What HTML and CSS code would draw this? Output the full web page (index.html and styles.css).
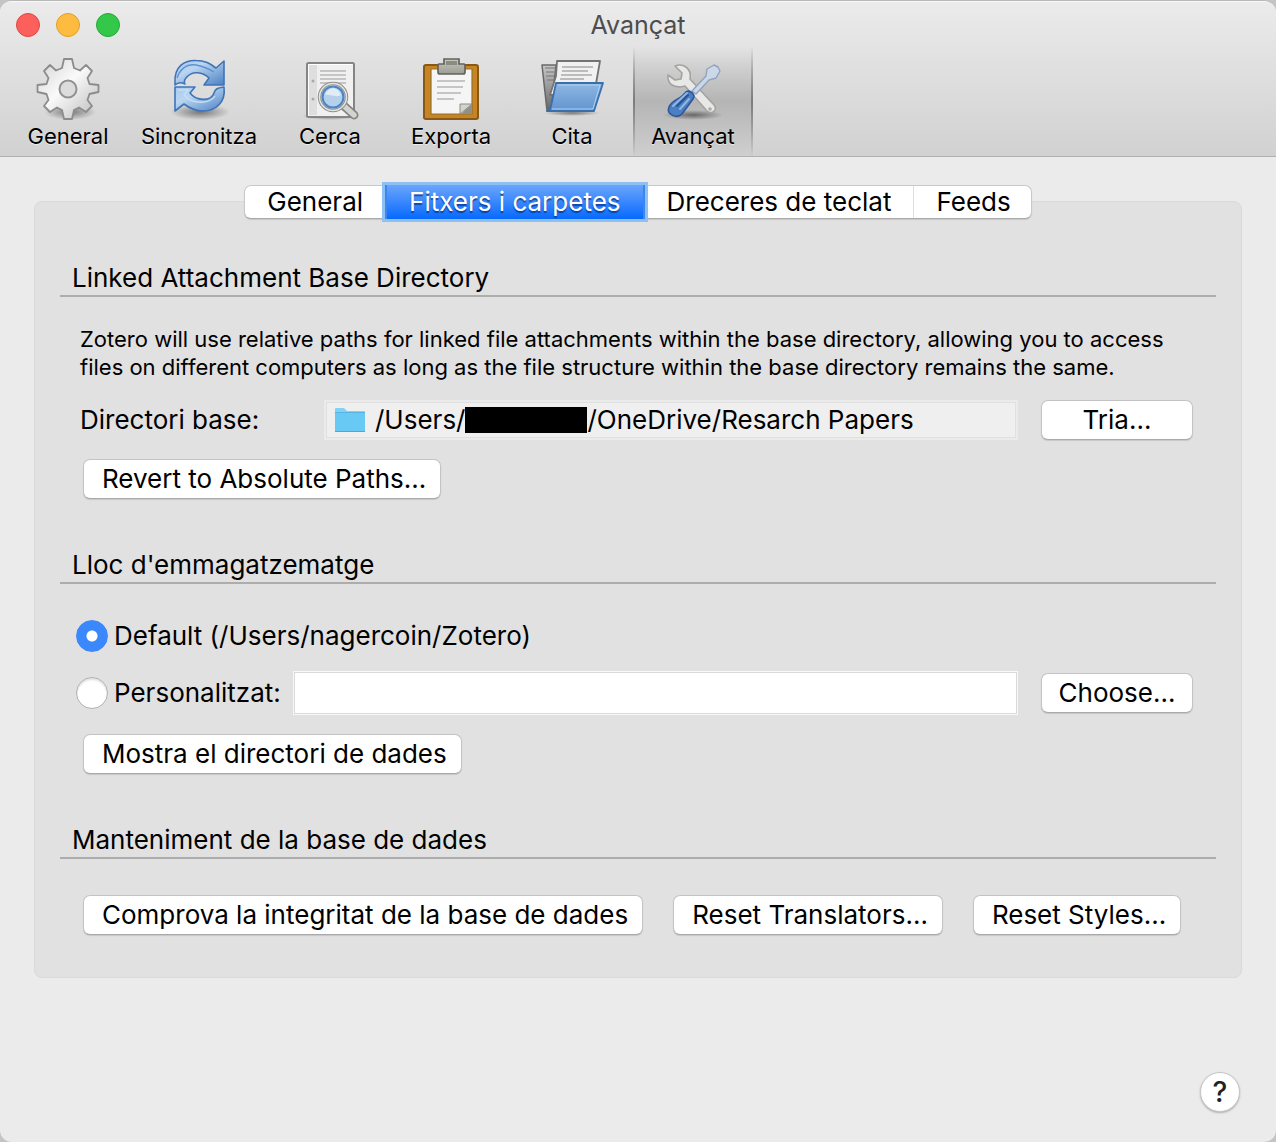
FILE: index.html
```html
<!DOCTYPE html>
<html lang="ca">
<head>
<meta charset="utf-8">
<title>Avançat</title>
<link rel="stylesheet" href="styles.css">
</head>
<body>
<div class="window">
  <header class="header">
    <div class="titlebar">
      <div class="lights">
        <button class="light light-close" type="button" aria-label="Close"></button>
        <button class="light light-minimize" type="button" aria-label="Minimize"></button>
        <button class="light light-zoom" type="button" aria-label="Zoom"></button>
      </div>
      <h1 class="title">Avançat</h1>
    </div>
    <nav class="toolbar">
      <button class="tool" type="button">
        <svg class="tool-icon" viewBox="0 0 64 64" aria-hidden="true">
          <defs>
            <linearGradient id="gear" x1="0" y1="0" x2="1" y2="1"><stop offset="0" stop-color="#d2d2d2"/><stop offset=".45" stop-color="#fafafa"/><stop offset="1" stop-color="#b9b9b9"/></linearGradient>
            <radialGradient id="shade"><stop offset="0" stop-color="#000" stop-opacity=".45"/><stop offset="1" stop-color="#000" stop-opacity="0"/></radialGradient>
          </defs>
          <ellipse cx="34" cy="56" rx="26" ry="8" fill="url(#shade)"/>
          <path d="M28 3h8l2 9 6 2.500 6-5.500 6 6-4.500 7 2 6 9 1v7l-9 2-2 6 4.500 6-6 6-7-4.500-5 2.500-2 9h-8l-2-9-5-2.500-7 4.500-6-6 4.500-6-2-6-9-2v-7l9-1 2-6-4.500-7 6-6 6 5.500 6-2.500z" fill="url(#gear)" stroke="#8c8c8c" stroke-width="1.800" stroke-linejoin="round"/>
          <circle cx="32" cy="33" r="8.500" fill="#dcdcdc" stroke="#929292" stroke-width="2"/>
        </svg>
        <span class="tool-label">General</span>
      </button>
      <button class="tool tool-wide" type="button">
        <svg class="tool-icon" viewBox="0 0 64 64" aria-hidden="true">
          <defs><linearGradient id="sync" x1="0" y1="0" x2="1" y2="1"><stop offset="0" stop-color="#a9cbef"/><stop offset=".35" stop-color="#b9d5f1"/><stop offset="1" stop-color="#4a80c4"/></linearGradient></defs>
          <ellipse cx="33" cy="56" rx="30" ry="8" fill="url(#shade)"/>
          <path d="M8 27C7 10 18 4 29 4.500c9 0 14 3 20 7.500l8-7v24H37l5-7c-6-6-17-8-23 0-2 2-2 5-1 6-4-2-8-1-10 1z" fill="url(#sync)" stroke="#3f74b6" stroke-width="1.600" stroke-linejoin="round"/>
          <path d="M10 22c4-11 11-14 19-13 6 1 13 4 18 7" fill="none" stroke="#5f92cf" stroke-width="1.400"/>
          <path d="M8 31h20l-5 6c6 8 21 9 24 0 1-3 2-5 10-6 2 16-9 24-21 24-9 0-15-4-19-7l-9 7z" fill="url(#sync)" stroke="#3f74b6" stroke-width="1.600" stroke-linejoin="round"/>
          <path d="M11 34h10l-4 5c8 10 26 9 31 1" fill="none" stroke="#c7def5" stroke-width="1.400"/>
        </svg>
        <span class="tool-label">Sincronitza</span>
      </button>
      <button class="tool" type="button">
        <svg class="tool-icon" viewBox="0 0 64 64" aria-hidden="true">
          <ellipse cx="32" cy="60" rx="28" ry="4" fill="url(#shade)"/>
          <rect x="9" y="7" width="47" height="54" rx="1.500" fill="#f0f0f0" stroke="#858585" stroke-width="2"/>
          <path d="M11 9h8v50h-8z" fill="#dedede"/>
          <path d="M10.500 59.500V8.500h44" fill="none" stroke="#fff" stroke-width="1"/>
          <g fill="#a9a9a9"><circle cx="15" cy="25" r="1.500"/><circle cx="15" cy="43" r="1.500"/></g>
          <path d="M22 15h26M22 19h26M22 23h26M22 27h26M22 49h12" stroke="#b7b7b7" stroke-width="1.700"/>
          <path d="M46 50l10 9" stroke="#858580" stroke-width="9" stroke-linecap="round"/>
          <path d="M46 50l10 9" stroke="#d3d3d0" stroke-width="5.500" stroke-linecap="round"/>
          <circle cx="35" cy="41" r="13.500" fill="#edf3f8" stroke="#8e8e8a" stroke-width="3.500"/>
          <circle cx="35" cy="41" r="13.500" fill="none" stroke="#e4e4e0" stroke-width="1.500"/>
          <circle cx="35" cy="41" r="10.500" fill="#b5d0eb" stroke="#4c84c6" stroke-width="2.200"/>
          <path d="M27 39c3-9 13-9 16 0-5 3-11-1-16 0z" fill="#e0ecf8"/>
        </svg>
        <span class="tool-label">Cerca</span>
      </button>
      <button class="tool" type="button">
        <svg class="tool-icon" viewBox="0 0 64 64" aria-hidden="true">
          <defs><linearGradient id="clip" x1="0" y1="0" x2="0" y2="1"><stop offset="0" stop-color="#c9c9c0"/><stop offset="1" stop-color="#9b9c93"/></linearGradient></defs>
          <ellipse cx="32" cy="62" rx="31" ry="3" fill="url(#shade)"/>
          <rect x="5" y="9" width="54" height="54" rx="2" fill="#c68422" stroke="#875816" stroke-width="2"/>
          <path d="M12 13h41v45H12z" fill="#f5f5f5" stroke="#96702c" stroke-width="1.200"/>
          <path d="M18 25h28M18 31h26M18 37h24M18 43h17" stroke="#c5c5c5" stroke-width="1.800"/>
          <path d="M41 58V48h12z" fill="#d4d4ce" stroke="#8b8b84"/>
          <path d="M42 58l11-10v10z" fill="#8f9089"/>
          <path d="M20 8h5V3h15v5h5q1 0 1 2v6q0 2-2 2H21q-2 0-2-2v-6q0-2 1-2z" fill="url(#clip)" stroke="#62635d" stroke-width="1.700"/>
          <path d="M27 5h11v4H27z" fill="#8a8b82"/>
        </svg>
        <span class="tool-label">Exporta</span>
      </button>
      <button class="tool" type="button">
        <svg class="tool-icon" viewBox="0 0 64 64" aria-hidden="true">
          <defs>
            <linearGradient id="folder" x1="0" y1="0" x2="0" y2="1"><stop offset="0" stop-color="#8eb7e3"/><stop offset="1" stop-color="#6194cf"/></linearGradient>
            <linearGradient id="back" x1="0" y1="0" x2="0" y2="1"><stop offset="0" stop-color="#c7c7c7"/><stop offset="1" stop-color="#666"/></linearGradient>
          </defs>
          <ellipse cx="32" cy="57" rx="28" ry="3" fill="url(#shade)"/>
          <path d="M2 9h14l-5 46H7z" fill="url(#back)" stroke="#686868" stroke-width="1.500" stroke-linejoin="round"/>
          <path d="M5 12h10M6 16h8M6 20h8M7 24h7" stroke="#777"/>
          <path d="M17 5h43l-6 34H10L16 20z" fill="#f1f1f1" stroke="#737373" stroke-width="1.800" stroke-linejoin="round"/>
          <path d="M22 11h31M22 15h26M21 19h31M20 23h24" stroke="#ababab" stroke-width="1.500"/>
          <path d="M16 27h47l-9 28H7q3 0 4-5z" fill="url(#folder)" stroke="#3a6fae" stroke-width="1.800" stroke-linejoin="round"/>
          <path d="M18 29h42l-7 24H12" fill="none" stroke="#b2d0ef" stroke-width="1"/>
        </svg>
        <span class="tool-label">Cita</span>
      </button>
      <button class="tool tool-active" type="button" aria-pressed="true">
        <svg class="tool-icon" viewBox="0 0 64 64" aria-hidden="true">
          <ellipse cx="32" cy="59" rx="30" ry="5" fill="url(#shade)"/>
          <path d="M14 10c8-3 17 2 15 13l24 26c4 5-2 10-7 6L24 30C13 33 6 28 7 19l7 5 6-1 1-6z" fill="#e8e8e6" stroke="#a3a3a0" stroke-width="1.600" stroke-linejoin="round"/>
          <circle cx="49" cy="53" r="1.800" fill="#aaa"/>
          <path d="M31 35l14-15 1-7 7-4 4 2 2 4-4 7-7 2-13 14z" fill="#cbd8e8" stroke="#91a3bf" stroke-width="1.400" stroke-linejoin="round"/>
          <path d="M25 36c4-3 10 3 7 7L21 58c-5 5-16 1-13-7 3-7 9-7 13-11z" fill="#4b7fc2" stroke="#2f5797" stroke-width="1.600"/>
          <path d="M12 50L26 37M19 53l9-10" stroke="#90b6e4" stroke-width="2" stroke-linecap="round"/>
          <path d="M16 50l11-11" stroke="#2b5290" stroke-width="2" stroke-linecap="round"/>
        </svg>
        <span class="tool-label">Avançat</span>
      </button>
    </nav>
  </header>

  <main class="content">
    <div class="tabs" role="tablist">
      <button class="tab" type="button" role="tab">General</button>
      <button class="tab tab-selected" type="button" role="tab" aria-selected="true">Fitxers i carpetes</button>
      <button class="tab" type="button" role="tab">Dreceres de teclat</button>
      <button class="tab" type="button" role="tab">Feeds</button>
    </div>

    <div class="panel" role="tabpanel">
      <section class="group">
        <h2 class="group-title">Linked Attachment Base Directory</h2>
        <div class="group-body group-body-text">
          <p class="note">Zotero will use relative paths for linked file attachments within the base directory, allowing you to access files on different computers as long as the file structure within the base directory remains the same.</p>
          <div class="row row-path">
            <span class="path-label">Directori base:</span>
            <div class="path">
              <svg class="path-icon" viewBox="0 0 32 26" aria-hidden="true">
                <path d="M1 2q0-1 1-1h8l3 3h17q1 0 1 1v19H1z" fill="#83d2f5"/>
                <path d="M1 6h30v18q0 1-1 1H2q-1 0-1-1z" fill="#68c9f5"/>
                <path d="M1 5.500h30" stroke="#58b5e2"/>
                <path d="M1 24.500h30" stroke="#4ba8d5"/>
              </svg>
              <span class="path-text">/Users/<span class="redacted"></span>/OneDrive/Resarch Papers</span>
            </div>
            <button class="button" type="button">Tria...</button>
          </div>
          <div class="actions">
            <button class="button" type="button">Revert to Absolute Paths...</button>
          </div>
        </div>
      </section>

      <section class="group">
        <h2 class="group-title">Lloc d'emmagatzematge</h2>
        <div class="group-body">
          <label class="choice"><input class="radio" type="radio" name="location" checked>Default (/Users/nagercoin/Zotero)</label>
          <div class="row row-custom">
            <label class="choice"><input class="radio" type="radio" name="location">Personalitzat:</label>
            <input class="field" type="text" aria-label="Personalitzat">
            <button class="button" type="button">Choose...</button>
          </div>
          <div class="actions">
            <button class="button" type="button">Mostra el directori de dades</button>
          </div>
        </div>
      </section>

      <section class="group">
        <h2 class="group-title">Manteniment de la base de dades</h2>
        <div class="group-body">
          <div class="actions">
            <button class="button" type="button">Comprova la integritat de la base de dades</button>
            <button class="button" type="button">Reset Translators...</button>
            <button class="button" type="button">Reset Styles...</button>
          </div>
        </div>
      </section>
    </div>
  </main>

  <footer class="footer">
    <button class="help" type="button" aria-label="Help">?</button>
  </footer>
</div>
</body>
</html>
```
FILE: styles.css
```css
* {
  box-sizing: border-box;
}

body {
  margin: 0;
  background: #c4c4c4;
  color: #000;
  font-family: Inter, "Liberation Sans", sans-serif;
  font-size: 26px;
  line-height: 32px;
}

button,
input {
  margin: 0;
  color: inherit;
  font: inherit;
}

.window {
  display: flex;
  flex-direction: column;
  min-height: 100vh;
  border-top: 1px solid #b9b9b9;
  border-radius: 12px;
  background: #ebebeb;
  overflow: hidden;
}

.header {
  border-top: 1px solid #f8f8f8;
  border-bottom: 1px solid #b1b1b1;
  background: linear-gradient(#ebebeb, #d1d1d1);
}

.titlebar {
  display: grid;
  grid-template-columns: 1fr auto 1fr;
  align-items: center;
  height: 45px;
  padding: 0 16px;
}

.lights {
  display: flex;
  gap: 16px;
}

.light {
  width: 24px;
  height: 24px;
  padding: 0;
  border: 1px solid;
  border-radius: 50%;
}

.light-close {
  border-color: #e2463f;
  background: #fc605c;
}

.light-minimize {
  border-color: #dfa023;
  background: #fdbc40;
}

.light-zoom {
  border-color: #27a934;
  background: #34c84a;
}

.title {
  margin: 0;
  color: #4d4d4d;
  font-size: 25px;
  font-weight: 400;
}

.toolbar {
  display: flex;
  gap: 1px;
  padding-left: 8px;
}

.tool {
  display: flex;
  flex-direction: column;
  align-items: center;
  width: 120px;
  padding: 9px 0 3px;
  border: 1px solid transparent;
  border-width: 0 1px;
  background: none;
  font-size: 22px;
  line-height: 33px;
}

.tool-wide {
  width: 140px;
}

.tool-active {
  border-image: linear-gradient(transparent, #7c7c7c 50%, transparent) 1;
  border-image-width: 0 2px;
  background: linear-gradient(transparent, #b5b5b5 50%, #cfcfcf);
}

.tool-icon {
  width: 64px;
  height: 64px;
}

.tool-label {
  text-shadow: 0 1px 0 rgba(255, 255, 255, 0.6);
}

.content {
  padding: 28px 34px 0;
}

.tabs {
  position: relative;
  display: flex;
  width: fit-content;
  height: 34px;
  margin: 0 auto -18px;
  border: 1px solid #c9c9c9;
  border-bottom-color: #a9a9a9;
  border-radius: 7px;
  background: #fff;
  box-shadow: 0 1px 1px rgba(0, 0, 0, 0.12);
}

.tab {
  padding: 0 22px;
  border: 0;
  background: none;
  line-height: 32px;
}

.tab:last-child {
  padding: 0 20px 0 22px;
  border-left: 1px solid #dedede;
}

.tab-selected {
  margin: -1px 0;
  padding: 0 24px;
  background: linear-gradient(#6ba5fb, #066aff);
  box-shadow: inset 2px 0 #3b86f0, inset -2px 0 #3b86f0, 0 0 0 3px #8fc0f3;
  color: #fff;
  text-shadow: 0 2px 1px rgba(0, 30, 100, 0.6);
}

.panel {
  display: flex;
  flex-direction: column;
  gap: 50px;
  padding: 60px 25px 42px;
  border: 1px solid #d9d9d9;
  border-radius: 8px;
  background: #e1e1e1;
}

.group-title {
  margin: 0;
  padding: 0 12px 1px;
  border-bottom: 2px solid #adadad;
  font-size: 26px;
  font-weight: 400;
}

.group-body {
  display: flex;
  flex-direction: column;
  gap: 19px;
  padding: 36px 23px 0 16px;
}

.group-body-text {
  padding-top: 28px;
}

.note {
  margin: 0 0 0 4px;
  font-size: 22px;
  line-height: 28px;
}

.row {
  display: grid;
  align-items: center;
}

.row-path {
  grid-template-columns: 248px 1fr 175px;
}

.row-custom {
  grid-template-columns: 217px 1fr 175px;
}

.row .button {
  margin-left: 23px;
  padding: 0;
}

.path-label {
  padding-left: 4px;
}

.path {
  display: flex;
  align-items: center;
  gap: 9px;
  height: 40px;
  padding-left: 8px;
  border: 2px solid #ebebeb;
  outline: 1px solid #e0e0e0;
  outline-offset: -3px;
  background: #efefef;
}

.path-icon {
  width: 32px;
  height: 26px;
}

.path-text {
  display: flex;
  align-items: center;
}

.redacted {
  width: 122px;
  height: 26px;
  background: #000;
}

.actions {
  display: flex;
  gap: 30px;
  padding-left: 7px;
}

.button {
  height: 40px;
  padding: 0 14px 0 18px;
  border: 1px solid #c3c3c3;
  border-bottom-color: #a9a9a9;
  border-radius: 7px;
  background: #fff;
  box-shadow: 0 1px 1px rgba(0, 0, 0, 0.12);
  line-height: 38px;
  white-space: nowrap;
}

.choice {
  display: flex;
  align-items: center;
  gap: 6px;
}

.radio {
  width: 32px;
  height: 32px;
  border: 1px solid #b0b0b0;
  border-radius: 50%;
  background: #fff;
  box-shadow: inset 0 2px 2px rgba(0, 0, 0, 0.12);
  appearance: none;
}

.radio:checked {
  border-color: #3b88fd;
  background: radial-gradient(circle, #fff 5px, #3b88fd 6px);
  box-shadow: none;
}

.field {
  width: 100%;
  height: 44px;
  padding: 0 8px;
  border: 1px solid #f8f8f8;
  outline: 1px solid #dadada;
  outline-offset: -2px;
  background: #fff;
}

.footer {
  display: flex;
  justify-content: flex-end;
  margin-top: auto;
  padding: 30px 36px;
}

.help {
  width: 40px;
  height: 40px;
  padding: 0;
  border: 1px solid #c6c6c6;
  border-radius: 50%;
  background: #fff;
  box-shadow: 0 1px 2px rgba(0, 0, 0, 0.25);
  color: #222;
  font-size: 28px;
  font-weight: 500;
  line-height: 38px;
}
```
